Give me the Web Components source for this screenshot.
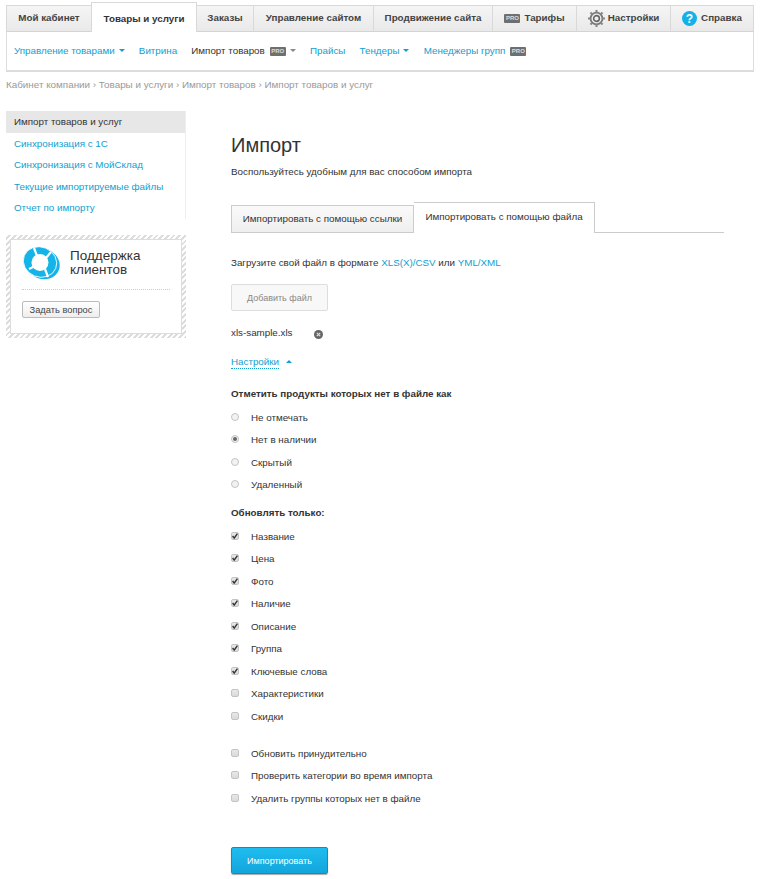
<!doctype html>
<html>
<head>
<meta charset="utf-8">
<style>
  html, body { margin: 0; background: #fff; }
  body { font: 9.8px/14px "Liberation Sans", Arial, sans-serif; color: #333; width: 760px; height: 879px; overflow: hidden; }
  a { color: #0fa0d0; text-decoration: none; }
</style>
</head>
<body>

<top-nav>
  <nav-tab style="width:86px">Мой кабинет</nav-tab>
  <nav-tab active style="width:106px">Товары и услуги</nav-tab>
  <nav-tab style="width:57px">Заказы</nav-tab>
  <nav-tab style="width:120px">Управление сайтом</nav-tab>
  <nav-tab style="width:119px">Продвижение сайта</nav-tab>
  <nav-tab style="width:84px"><pro-badge></pro-badge>Тарифы</nav-tab>
  <nav-tab style="width:94px">
    <svg width="17" height="17" viewBox="0 0 16 16" style="margin-right:3px">
      <circle cx="8" cy="8" r="5.6" fill="none" stroke="#777" stroke-width="1.7"/>
      <circle cx="8" cy="8" r="2.7" fill="none" stroke="#666" stroke-width="1.5"/>
      <g stroke="#888" stroke-width="2">
        <path d="M8 0v2.6M8 13.4V16M0 8h2.6M13.4 8H16M2.3 2.3l1.9 1.9M11.8 11.8l1.9 1.9M2.3 13.7l1.9-1.9M11.8 4.2l1.9-1.9"/>
      </g>
    </svg>Настройки</nav-tab>
  <nav-tab last style="width:83px">
    <svg width="15" height="15" viewBox="0 0 15 15" style="margin-right:4px">
      <circle cx="7.5" cy="7.5" r="7.5" fill="#14b0e8"/>
      <text x="7.5" y="12" text-anchor="middle" font-family="Liberation Sans" font-size="12" font-weight="700" fill="#fff">?</text>
    </svg>Справка</nav-tab>
</top-nav>

<sub-nav>
  <a href="#">Управление товарами<drop-caret></drop-caret></a>
  <a href="#">Витрина</a>
  <span>Импорт товаров<pro-badge style="margin:0 0 0 5px"></pro-badge><drop-caret grey></drop-caret></span>
  <a href="#">Прайсы</a>
  <a href="#">Тендеры<drop-caret></drop-caret></a>
  <a href="#">Менеджеры групп<pro-badge style="margin:0 0 0 5px"></pro-badge></a>
</sub-nav>

<bread-crumbs>
  <span>Кабинет компании</span><span>Товары и услуги</span><span>Импорт товаров</span><span>Импорт товаров и услуг</span>
</bread-crumbs>

<page-body>
  <div slot="side">
    <side-menu>
      <b>Импорт товаров и услуг</b>
      <a href="#">Синхронизация с 1С</a>
      <a href="#">Синхронизация с МойСклад</a>
      <a href="#">Текущие импортируемые файлы</a>
      <a href="#">Отчет по импорту</a>
    </side-menu>
    <support-box></support-box>
  </div>
  <import-form></import-form>
</page-body>

<script>
const caretTpl = document.createElement('template')
caretTpl.innerHTML = `
<style>
  :host { display: inline-block; width: 0; height: 0; margin-left: 4px; vertical-align: 2px;
    border: 3px solid transparent; border-bottom-width: 0; border-top: 3px solid #0fa0d0; }
  :host([grey]) { border-top-color: #888; margin-left: 4px; }
</style>`
customElements.define('drop-caret', class extends HTMLElement {
  constructor() {
    super()
    this.attachShadow({ mode: 'open' }).appendChild(caretTpl.content.cloneNode(true))
  }
})

const proTpl = document.createElement('template')
proTpl.innerHTML = `
<style>
  :host { display: inline-block; width: 16px; height: 9px; margin-right: 4px; background: #6f6f6f; border-radius: 1px;
    color: #ddd; font: 700 6px/9px "Liberation Sans", sans-serif; text-align: center; vertical-align: 1px; }
</style>PRO`
customElements.define('pro-badge', class extends HTMLElement {
  constructor() {
    super()
    this.attachShadow({ mode: 'open' }).appendChild(proTpl.content.cloneNode(true))
  }
})

const topNavTpl = document.createElement('template')
topNavTpl.innerHTML = `
<style>
  :host { display: flex; align-items: flex-end; height: 30px; margin: 2px 0 0 6px; width: 748px; }
</style>
<slot></slot>`
customElements.define('top-nav', class extends HTMLElement {
  constructor() {
    super()
    this.attachShadow({ mode: 'open' }).appendChild(topNavTpl.content.cloneNode(true))
  }
})

const tabTpl = document.createElement('template')
tabTpl.innerHTML = `
<style>
  :host { display: flex; align-items: center; justify-content: center; box-sizing: border-box; height: 27px;
    background: linear-gradient(#f5f5f5, #e9e9e9); border: 1px solid #d9d9d9; border-left-width: 0; border-bottom: 1px solid #d4d4d4;
    font-weight: 700; color: #444; white-space: nowrap; padding-bottom: 1px; }
  :host(:first-child) { border-left-width: 1px; }
  :host([active]) { height: 30px; background: #fff; border: 1px solid #d9d9d9; border-bottom: 0; margin: 0 0 0 -1px; padding-bottom: 0; padding-top: 2px; position: relative; z-index: 1; color: #333; }
</style>
<slot></slot>`
customElements.define('nav-tab', class extends HTMLElement {
  constructor() {
    super()
    this.attachShadow({ mode: 'open' }).appendChild(tabTpl.content.cloneNode(true))
  }
})

const subNavTpl = document.createElement('template')
subNavTpl.innerHTML = `
<style>
  :host { display: flex; align-items: center; gap: 14.2px; box-sizing: border-box; width: 748px; height: 40px; margin-left: 6px;
    padding: 0 0 0 7px; border: 1px solid #ddd; border-top: 0; border-bottom-width: 2px; white-space: nowrap; }
  ::slotted(a) { color: #0fa0d0; }
</style>
<slot></slot>`
customElements.define('sub-nav', class extends HTMLElement {
  constructor() {
    super()
    this.attachShadow({ mode: 'open' }).appendChild(subNavTpl.content.cloneNode(true))
  }
})

const crumbsTpl = document.createElement('template')
crumbsTpl.innerHTML = `
<style>
  :host { display: block; margin: 6px 0 0 6px; height: 14px; color: #999; font-size: 9.85px; }
  ::slotted(span:not(:last-child))::after { content: " › "; }
</style>
<slot></slot>`
customElements.define('bread-crumbs', class extends HTMLElement {
  constructor() {
    super()
    this.attachShadow({ mode: 'open' }).appendChild(crumbsTpl.content.cloneNode(true))
  }
})

const bodyTpl = document.createElement('template')
bodyTpl.innerHTML = `
<style>
  :host { display: grid; grid-template-columns: 180px 1fr; column-gap: 45px; margin: 19px 0 0 6px; }
</style>
<slot name="side"></slot>
<slot></slot>`
customElements.define('page-body', class extends HTMLElement {
  constructor() {
    super()
    this.attachShadow({ mode: 'open' }).appendChild(bodyTpl.content.cloneNode(true))
  }
})

const sideTpl = document.createElement('template')
sideTpl.innerHTML = `
<style>
  :host { display: block; border-right: 1px solid #eee; height: 108px; box-sizing: border-box; }
  ::slotted(b) { display: block; height: 21.8px; line-height: 22px; padding-left: 8px; background: #e7e7e7; font-weight: 400; }
  ::slotted(a) { display: block; height: 21.4px; line-height: 21.4px; padding-left: 8px; color: #0fa0d0; }
</style>
<slot></slot>`
customElements.define('side-menu', class extends HTMLElement {
  constructor() {
    super()
    this.attachShadow({ mode: 'open' }).appendChild(sideTpl.content.cloneNode(true))
  }
})

const supportTpl = document.createElement('template')
supportTpl.innerHTML = `
<style>
  :host { display: block; box-sizing: border-box; width: 180px; height: 103px; margin-top: 16px; padding: 4px;
    background: repeating-linear-gradient(-45deg, #ddd 0 2px, #fff 2px 4px); }
  .in { box-sizing: border-box; height: 100%; background: #fff; border: 1px solid #ddd; padding: 5px 11px 0; }
  .top { display: flex; align-items: flex-start; gap: 10px; height: 44px; border-bottom: 1px dotted #ccc; }
  h3 { margin: 4px 0 0; font: 400 13.5px/14px "Liberation Sans", sans-serif; color: #333; }
  button { display: block; margin-top: 11px; width: 78px; height: 17px; padding: 0; border: 1px solid #bbb; border-radius: 2px;
    background: linear-gradient(#fff, #eee); font: 9.3px "Liberation Sans", sans-serif; color: #444; }
  svg { flex: none; }
</style>
<div class="in">
  <div class="top">
    <svg width="38" height="36" viewBox="0 0 38 36">
      <ellipse cx="21" cy="19" rx="17" ry="15" transform="rotate(22 21 19)" fill="#14b4e8"/>
      <ellipse cx="18" cy="17" rx="17" ry="15" transform="rotate(22 18 17)" fill="#14b4e8" stroke="#fff" stroke-width="0.8"/>
      <circle cx="18" cy="17.5" r="8.5" fill="#fff"/>
      <g stroke="#fff" stroke-width="2.2">
        <path d="M12 3l3 8M29 7l-5 6M7 24l6-3M23 24l3 8"/>
      </g>
    </svg>
    <h3>Поддержка<br>клиентов</h3>
  </div>
  <button>Задать вопрос</button>
</div>`
customElements.define('support-box', class extends HTMLElement {
  constructor() {
    super()
    this.attachShadow({ mode: 'open' }).appendChild(supportTpl.content.cloneNode(true))
  }
})

const optTpl = document.createElement('template')
optTpl.innerHTML = `
<style>
  :host { display: flex; align-items: center; height: 22.5px; color: #333; }
  .box { box-sizing: border-box; width: 8px; height: 8px; margin-right: 12px; position: relative; top: -1px;
    border: 1px solid #c4c4c4; background: linear-gradient(#e8e8e8, #dadada); border-radius: 2px; }
  :host([type=radio]) .box { border-radius: 50%; background: #f2f2f2; }
  :host([type=radio][checked]) .box::after { content: ""; position: absolute; left: 1px; top: 1px; width: 4px; height: 4px; border-radius: 50%; background: #666; }
  svg { display: none; position: absolute; left: -1px; top: -1px; }
  :host([type=check][checked]) svg { display: block; }
</style>
<span class="box"><svg width="8" height="8" viewBox="0 0 10 10"><path d="M2 5l2 2.6L8 2" fill="none" stroke="#333" stroke-width="1.8"/></svg></span>
<slot></slot>`
customElements.define('opt-row', class extends HTMLElement {
  constructor() {
    super()
    this.attachShadow({ mode: 'open' }).appendChild(optTpl.content.cloneNode(true))
  }
})

const formTpl = document.createElement('template')
formTpl.innerHTML = `
<style>
  :host { display: block; width: 493px; }
  a { color: #0fa0d0; text-decoration: none; }
  h1 { margin: 0; padding-top: 21px; font: 400 20px/26px "Liberation Sans", sans-serif; color: #333; }
  .lead { margin: 7px 0 0; }
  .tabs { display: flex; align-items: flex-end; height: 34px; margin-top: 19px; border-bottom: 1px solid #ccc; }
  .tab { box-sizing: border-box; height: 28px; line-height: 26px; width: 183px; text-align: center; border: 1px solid #ccc; background: linear-gradient(#fafafa, #efefef); margin-bottom: -1px; }
  .tab.on { height: 31px; width: 181px; line-height: 28px; background: #fff; border-bottom: 0; border-left: 0; }
  .fmt { margin: 23px 0 0; }
  .add { display: block; box-sizing: border-box; width: 97px; height: 27px; margin-top: 14px; padding: 0; border: 1px solid #ddd; border-radius: 2px; background: #f8f8f8; color: #888; font: 9px "Liberation Sans", sans-serif; }
  .file { display: flex; align-items: center; margin-top: 15px; height: 14px; }
  .file i { display: block; width: 9px; height: 9px; margin-left: 21px; }
  .more { display: inline-block; margin-top: 15px; color: #0fa0d0; border-bottom: 1px dotted #0fa0d0; line-height: 13px; }
  .up { display: inline-block; margin-left: 7px; border: 3px solid transparent; border-top: 0; border-bottom-color: #0fa0d0; vertical-align: 2px; }
  h4 { margin: 0; font: 700 9.8px/14px "Liberation Sans", sans-serif; color: #333; }
  .g1 { margin-top: 18px; }
  .list { margin-top: 5.5px; }
  .g2 { margin-top: 9.5px; }
  .g3 { margin-top: 14.5px; }
  .submit { display: block; box-sizing: border-box; width: 97px; height: 27px; margin-top: 37px; padding: 0; border: 1px solid #0c8fc0; border-radius: 2px;
    background: linear-gradient(#1fbcef, #12a6dc); color: #fff; font: 9px "Liberation Sans", sans-serif; box-shadow: 0 1px 1px #aaa; }
</style>
<h1>Импорт</h1>
<p class="lead">Воспользуйтесь удобным для вас способом импорта</p>
<div class="tabs">
  <div class="tab">Импортировать с помощью ссылки</div>
  <div class="tab on">Импортировать с помощью файла</div>
</div>
<p class="fmt">Загрузите свой файл в формате <a href="#">XLS(X)/CSV</a> или <a href="#">YML/XML</a></p>
<button class="add">Добавить файл</button>
<div class="file">xls-sample.xls<i><svg width="9" height="9" viewBox="0 0 9 9"><circle cx="4.5" cy="4.5" r="4.5" fill="#666"/><path d="M2.8 2.8l3.4 3.4M6.2 2.8L2.8 6.2" stroke="#ddd" stroke-width="1.2"/></svg></i></div>
<span class="more">Настройки</span><span class="up"></span>
<h4 class="g1">Отметить продукты которых нет в файле как</h4>
<div class="list">
  <opt-row type="radio">Не отмечать</opt-row>
  <opt-row type="radio" checked>Нет в наличии</opt-row>
  <opt-row type="radio">Скрытый</opt-row>
  <opt-row type="radio">Удаленный</opt-row>
</div>
<h4 class="g2">Обновлять только:</h4>
<div class="list">
  <opt-row type="check" checked>Название</opt-row>
  <opt-row type="check" checked>Цена</opt-row>
  <opt-row type="check" checked>Фото</opt-row>
  <opt-row type="check" checked>Наличие</opt-row>
  <opt-row type="check" checked>Описание</opt-row>
  <opt-row type="check" checked>Группа</opt-row>
  <opt-row type="check" checked>Ключевые слова</opt-row>
  <opt-row type="check">Характеристики</opt-row>
  <opt-row type="check">Скидки</opt-row>
</div>
<div class="g3">
  <opt-row type="check">Обновить принудительно</opt-row>
  <opt-row type="check">Проверить категории во время импорта</opt-row>
  <opt-row type="check">Удалить группы которых нет в файле</opt-row>
</div>
<button class="submit">Импортировать</button>`
customElements.define('import-form', class extends HTMLElement {
  constructor() {
    super()
    this.attachShadow({ mode: 'open' }).appendChild(formTpl.content.cloneNode(true))
  }
})
</script>
</body>
</html>
